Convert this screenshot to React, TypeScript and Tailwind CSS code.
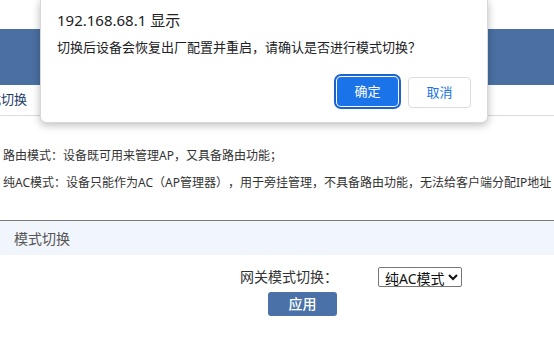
import React, { useState } from "react";

const font = "font-['Noto_Sans','Noto_Sans_CJK_SC',sans-serif] [text-spacing-trim:space-all]";

function ConfirmDialog() {
  return (
    <div className="absolute left-[40px] top-0 w-[448px] h-[123px] bg-white rounded-b-[6px] shadow-[0_2px_8px_rgba(0,0,0,0.28)] border border-t-0 border-[#d8d8d8] pl-[16px] pr-[16px]">
      <div className="pt-[9px] text-[15px] leading-[22px] text-[#202124]">192.168.68.1 显示</div>
      <div className="mt-[6px] text-[13px] leading-[20px] text-[#202124]">
        切换后设备会恢复出厂配置并重启，请确认是否进行模式切换？
      </div>
      <div className="flex justify-end gap-[10px] mt-[20px]">
        <button className="w-[61px] h-[29px] rounded-[4px] bg-[#1a73e8] text-white text-[13px] ring-2 ring-[#1a62cc] ring-offset-1">
          确定
        </button>
        <button className="w-[63px] h-[31px] rounded-[4px] bg-white border border-[#dadce0] text-[#1a73e8] text-[13px]">
          取消
        </button>
      </div>
    </div>
  );
}

export default function App() {
  const [mode, setMode] = useState("ac");

  return (
    <div className={`relative w-[554px] h-[340px] overflow-hidden bg-white ${font}`}>
      <div className="h-[29px]" />
      <div className="h-[56px] bg-[#4a70a2]" />
      <div className="h-[31px] border-b border-[#dcdcdc] flex items-center overflow-hidden">
        <span className="ml-[-12px] text-[13px] text-[#1d3b66]">式切换</span>
      </div>

      <div className="pt-[26px] pl-[3px] text-[12px] leading-[27px] text-[#333] whitespace-nowrap">
        <div>路由模式：设备既可用来管理AP，又具备路由功能；</div>
        <div>纯AC模式：设备只能作为AC（AP管理器），用于旁挂管理，不具备路由功能，无法给客户端分配IP地址</div>
      </div>

      <div className="mt-[24px] border-t border-[#7a7a7a]" />
      <div className="h-[34px] bg-[#f1f5fc] flex items-center pl-[14px] text-[14px] text-[#555]">
        模式切换
      </div>

      <div className="flex items-center mt-[11px] ml-[240px]">
        <span className="w-[138px] text-[14px] text-[#333]">网关模式切换：</span>
        <select
          value={mode}
          onChange={(e) => setMode(e.target.value)}
          className="w-[84px] h-[20px] text-[14px] text-[#111] border border-[#767676] rounded-[2px] bg-white pl-[2px]"
        >
          <option value="route">路由模式</option>
          <option value="ac">纯AC模式</option>
        </select>
      </div>
      <div className="ml-[268px] mt-[4px]">
        <button className="w-[69px] h-[24px] rounded-[3px] bg-[#4a72a8] text-white text-[14px] font-medium">
          应用
        </button>
      </div>

      <ConfirmDialog />
    </div>
  );
}
